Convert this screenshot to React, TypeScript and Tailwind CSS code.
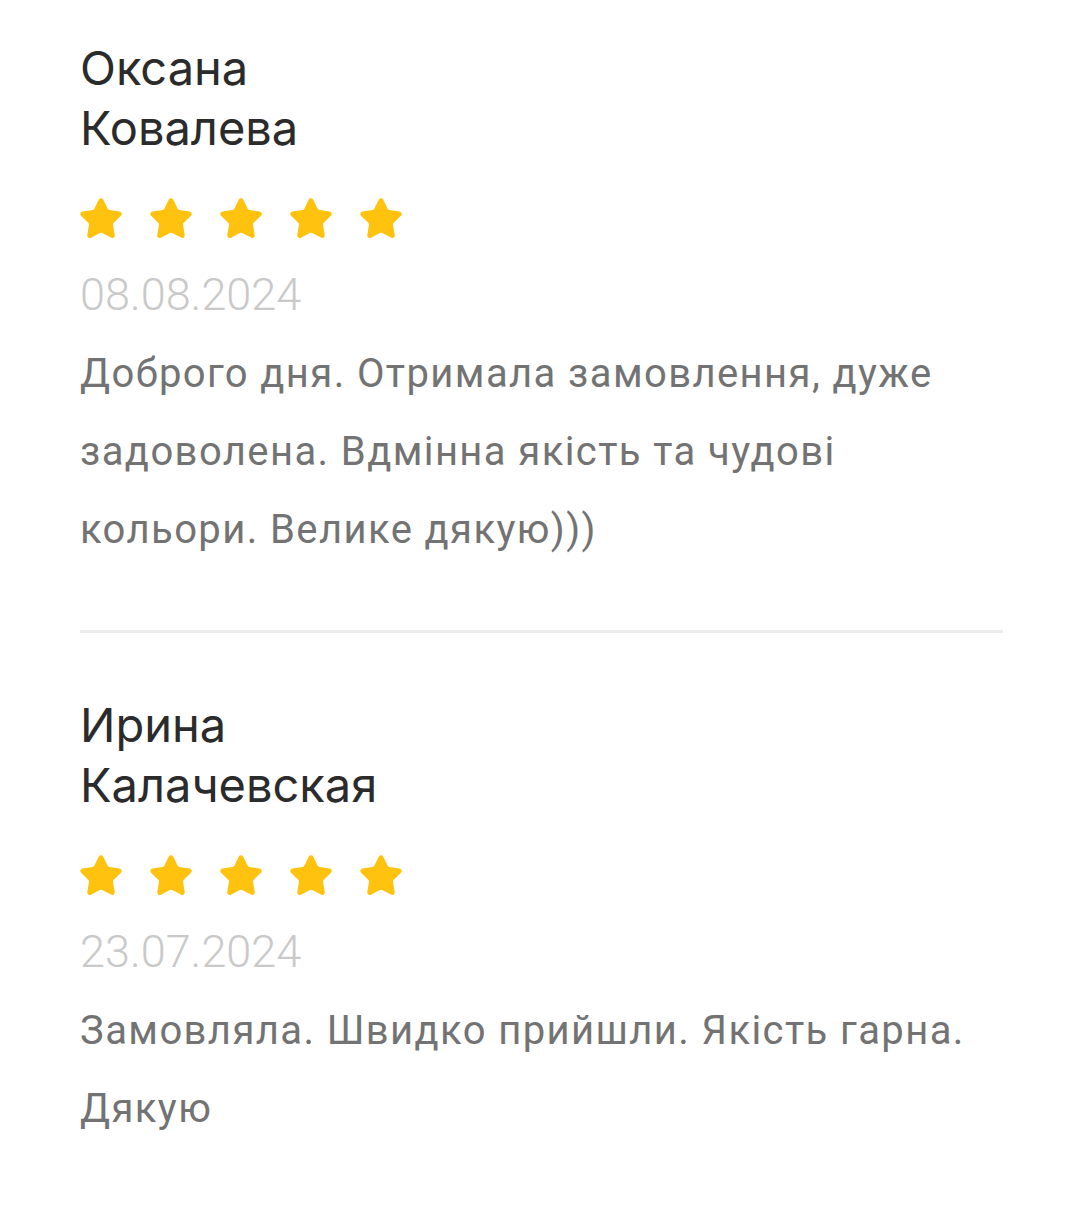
import { Star } from "lucide-react";

const reviews = [
  {
    name: ["Оксана", "Ковалева"],
    date: "08.08.2024",
    text: "Доброго дня. Отримала замовлення, дуже задоволена. Вдмінна якість та чудові кольори. Велике дякую)))",
  },
  {
    name: ["Ирина", "Калачевская"],
    date: "23.07.2024",
    text: "Замовляла. Швидко прийшли. Якість гарна. Дякую",
  },
];

function Stars() {
  return (
    <div className="flex gap-[24px] -ml-[2px]">
      {[0, 1, 2, 3, 4].map((i) => (
        <Star key={i} size={46} fill="#FFC20E" color="#FFC20E" strokeWidth={1.6} />
      ))}
    </div>
  );
}

export default function App() {
  return (
    <div className="min-h-screen bg-white px-[80px] pt-[38px] font-['Inter',sans-serif]">
      {reviews.map((r, idx) => (
        <div key={r.date}>
          {idx > 0 && <div className="h-[3px] w-[923px] bg-[#ececec] mt-[61px] mb-[62px]" />}
          <div className="text-[47px] leading-[60px] text-[#2b2b2b]">
            <div>{r.name[0]}</div>
            <div>{r.name[1]}</div>
          </div>
          <div className="mt-[38px]">
            <Stars />
          </div>
          <div className="mt-[25px] text-[45px] leading-[56px] text-[#c9c9c9] font-['Roboto',sans-serif] font-light">
            {r.date}
          </div>
          <p className="mt-[12px] w-[900px] text-[40px] leading-[78px] tracking-[1.4px] text-[#737373] font-['Roboto',sans-serif]">
            {r.text}
          </p>
        </div>
      ))}
    </div>
  );
}
